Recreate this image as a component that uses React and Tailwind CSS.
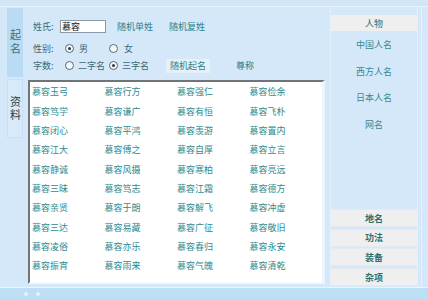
import React from "react";

const names = [
  ["慕容玉弓", "慕容行方", "慕容强仁", "慕容俭余"],
  ["慕容笃学", "慕容谦广", "慕容有恒", "慕容飞朴"],
  ["慕容闭心", "慕容平鸿", "慕容羡游", "慕容置内"],
  ["慕容江大", "慕容傅之", "慕容自厚", "慕容立言"],
  ["慕容静诚", "慕容风摄", "慕容寒柏", "慕容亮远"],
  ["慕容三昧", "慕容笃志", "慕容江霜", "慕容德方"],
  ["慕容亲贤", "慕容于朗", "慕容解飞", "慕容冲虚"],
  ["慕容三达", "慕容易藏", "慕容广征", "慕容敬旧"],
  ["慕容凌俗", "慕容亦乐", "慕容春归", "慕容永安"],
  ["慕容振宵", "慕容雨来", "慕容气魄", "慕容清乾"],
];

const font = { fontFamily: '"Noto Sans CJK SC", "Noto Sans", sans-serif' };

function Radio({ checked }) {
  return (
    <span className="flex h-[9px] w-[9px] items-center justify-center rounded-full border border-[#5a6670] bg-[#f4f8fb]">
      {checked && <span className="h-[3px] w-[3px] rounded-full bg-[#2b3a40]" />}
    </span>
  );
}

export default function App() {
  return (
    <div
      className="flex h-[300px] w-[428px] flex-col overflow-hidden bg-[#d5e8f9] text-[9px] leading-none"
      style={font}
    >
      <div className="h-[7px] border-b border-[#e6f2fc] bg-[#d2e6f8]" />
      <div className="flex h-[280px]">
        {/* left tabs */}
        <div className="flex w-[23px] flex-col pl-[7px] pt-[1px]">
          <div className="flex h-[69px] items-center justify-center bg-[#b9dbf3] text-[11px] text-[#3f6f7a]">
            <span className="tracking-[3px] [writing-mode:vertical-rl]">起名</span>
          </div>
          <div className="mt-[2px] flex h-[59px] items-center justify-center border border-[#c8e0f3] bg-[#d6eafa] text-[11px] text-[#2d3f44]">
            <span className="tracking-[2px] [writing-mode:vertical-rl]">资料</span>
          </div>
        </div>

        {/* main */}
        <div className="flex w-[304px] flex-col">
          <div className="mt-[13px] flex h-[13px] items-center pl-[10px] text-[#3a6a74]">
            <span className="w-[27px]">姓氏:</span>
            <div className="flex h-[13px] w-[46px] items-center border border-[#8a9aa6] bg-white pl-[1px] text-[#111]">
              慕容
            </div>
            <span className="ml-[11px] text-[#2b8088]">随机单姓</span>
            <span className="ml-[16px] text-[#2b8088]">随机复姓</span>
          </div>
          <div className="mt-[9px] flex h-[13px] items-center pl-[10px] text-[#3a6a74]">
            <span className="w-[32px]">性别:</span>
            <Radio checked />
            <span className="ml-[5px] w-[30px]">男</span>
            <Radio />
            <span className="ml-[6px]">女</span>
          </div>
          <div className="mt-[3px] flex h-[15px] items-center pl-[10px] text-[#3a6a74]">
            <span className="w-[32px]">字数:</span>
            <Radio />
            <span className="ml-[4px] w-[31px]">二字名</span>
            <Radio checked />
            <span className="ml-[4px]">三字名</span>
            <div className="ml-[17px] flex h-[14px] w-[44px] items-center justify-center bg-[#e7f0f7] text-[#2b8088]">
              随机起名
            </div>
            <span className="ml-[26px] text-[#2b8088]">尊称</span>
          </div>
          <div className="ml-[5px] mt-[7px] h-[204px] w-[297px] border-b-2 border-l-2 border-r-[3px] border-t-2 border-b-[#f3f8fc] border-l-[#6f7478] border-r-[#eef6fd] border-t-[#6f7478] bg-white pl-[2px]">
            {names.map((row, i) => (
              <div key={i} className="flex h-[19.35px] items-center text-[#2e8a8e]">
                {row.map((n, j) => (
                  <span key={j} className="w-[73px]">
                    {n}
                  </span>
                ))}
              </div>
            ))}
          </div>
        </div>

        {/* right panel */}
        <div className="ml-[3px] flex w-[88px] flex-col border-x border-[#e4f0fb] pt-[8px] pb-[1px]">
          <div className="flex h-[16px] items-center justify-center bg-[#efefef] text-[#2b6f73]">
            人物
          </div>
          {["中国人名", "西方人名", "日本人名", "网名"].map((t) => (
            <div key={t} className="flex h-[26.7px] items-center justify-center text-[#3a8a90]">
              {t}
            </div>
          ))}
          <div className="flex-1" />
          <div className="flex flex-col gap-[1.6px]">
            {["地名", "功法", "装备", "杂项"].map((t) => (
              <div
                key={t}
                className="flex h-[18px] items-center justify-center border-y border-[#e2ebf2] bg-[#efefef] font-bold text-[#2b6f73]"
              >
                {t}
              </div>
            ))}
          </div>
        </div>
        <div className="ml-[3px] w-[1px] bg-[#e6f2fc]" />
      </div>
      <div className="h-[1px] bg-[#eaf5fe]" />
      <div className="flex flex-1 items-center bg-[#bcdff6] pl-[24px]">
        <span className="h-[4px] w-[4px] rounded-full bg-[#e4f2fb]" />
        <span className="ml-[8px] h-[4px] w-[4px] rounded-full bg-[#e4f2fb]" />
      </div>
    </div>
  );
}
